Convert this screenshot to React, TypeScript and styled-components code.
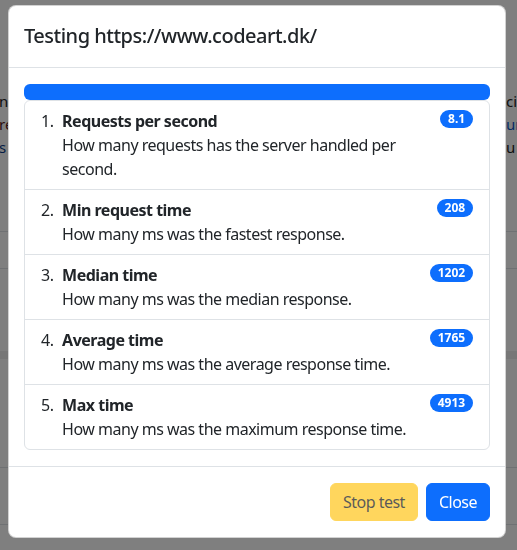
import React from "react";
import styled, { createGlobalStyle } from "styled-components";

const FONT = `"Noto Sans", "Open Sans", sans-serif`;

const GlobalStyle = createGlobalStyle`
  html, body { margin: 0; padding: 0; }
  body {
    font-family: ${FONT};
    color: #212529;
    background: #fff;
    overflow: hidden;
  }
  * { box-sizing: border-box; }
`;

/* ---------- background page ---------- */
const Page = styled.div`
  width: 517px;
  height: 550px;
  background: #fff;
  padding-top: 90px;
  font-size: 15px;
  line-height: 23px;
  overflow: hidden;
`;

const BgLine = styled.div`
  display: flex;
  justify-content: space-between;
  white-space: nowrap;
  height: 23px;
`;

const BgText = styled.span<{ $c?: string }>`
  color: ${(p) => p.$c || "#222"};
`;

const BgLeft = styled(BgText)`
  margin-left: -1px;
`;

const BgRight = styled(BgText)`
  width: 11px;
  overflow: hidden;
`;

const BgRule = styled.div<{ $top: number }>`
  margin-top: ${(p) => p.$top}px;
  border-top: 1px solid #dee2e6;
`;

const BgBand = styled.div<{ $top: number }>`
  margin-top: ${(p) => p.$top}px;
  height: 8px;
  background: #eeeeee;
`;

/* ---------- modal ---------- */
const Backdrop = styled.div`
  position: fixed;
  inset: 0;
  background: rgba(0, 0, 0, 0.5);
`;

const Dialog = styled.div`
  position: fixed;
  top: 5px;
  left: 8px;
  width: 498px;
`;

const Content = styled.div`
  display: flex;
  flex-direction: column;
  background: #fff;
  border: 1px solid rgba(0, 0, 0, 0.175);
  border-radius: 8px;
  overflow: hidden;
  letter-spacing: -0.5px;
`;

const Header = styled.div`
  padding: 15px 15px 16px;
  border-bottom: 1px solid #dee2e6;
`;

const Title = styled.h5`
  margin: 0;
  font-family: ${FONT};
  font-size: 20px;
  font-weight: 500;
  line-height: 30px;
  color: #212529;
`;

const Body = styled.div`
  padding: 16px 15px;
`;

const Progress = styled.div`
  height: 16px;
  border-radius: 6px;
  background: #e9ecef;
  overflow: hidden;
  display: flex;
`;

const ProgressBar = styled.div`
  background: #0d6efd;
  height: 100%;
`;

const List = styled.ol`
  margin: 0;
  padding: 0;
  list-style: none;
  counter-reset: section;
  border: 1px solid #dee2e6;
  border-radius: 6px;
`;

const Item = styled.li`
  display: flex;
  justify-content: space-between;
  align-items: flex-start;
  padding: 8px 16px;
  font-size: 16px;
  line-height: 24px;
  color: #212529;
  counter-increment: section;
  & + & {
    border-top: 1px solid #dee2e6;
  }
  &::before {
    content: counters(section, ".") ". ";
    white-space: pre;
  }
`;

const ItemText = styled.div`
  margin-left: 5px;
  margin-right: auto;
`;

const ItemTitle = styled.div`
  font-weight: 700;
`;

const Badge = styled.span`
  display: inline-block;
  flex-shrink: 0;
  margin-top: 1px;
  padding: 3px 7.8px 3px;
  font-size: 12px;
  font-weight: 700;
  line-height: 12px;
  letter-spacing: 0;
  color: #fff;
  background: #0d6efd;
  border-radius: 50rem;
  white-space: nowrap;
`;

const Footer = styled.div`
  display: flex;
  justify-content: flex-end;
  align-items: center;
  padding: 12px 11px 12px;
  border-top: 1px solid #dee2e6;
`;

const Button = styled.button<{ $variant: "warning" | "primary" }>`
  margin: 4px;
  padding: 6px 12px;
  font-family: ${FONT};
  font-size: 16px;
  line-height: 24px;
  letter-spacing: -0.5px;
  border-radius: 6px;
  border: 1px solid
    ${(p) => (p.$variant === "warning" ? "#ffc107" : "#0d6efd")};
  background: ${(p) => (p.$variant === "warning" ? "#ffc107" : "#0d6efd")};
  color: ${(p) => (p.$variant === "warning" ? "#000" : "#fff")};
  opacity: ${(p) => (p.$variant === "warning" ? 0.65 : 1)};
`;

const metrics = [
  { title: "Requests per second", desc: "How many requests has the server handled per second.", value: "8.1" },
  { title: "Min request time", desc: "How many ms was the fastest response.", value: "208" },
  { title: "Median time", desc: "How many ms was the median response.", value: "1202" },
  { title: "Average time", desc: "How many ms was the average response time.", value: "1765" },
  { title: "Max time", desc: "How many ms was the maximum response time.", value: "4913" },
];

export default function App() {
  return (
    <>
      <GlobalStyle />
      <Page>
        <BgLine>
          <BgLeft>ns</BgLeft>
          <BgRight>ci</BgRight>
        </BgLine>
        <BgLine>
          <BgLeft $c="#5a1a1a">re</BgLeft>
          <BgRight $c="#0a58ca">ur</BgRight>
        </BgLine>
        <BgLine>
          <BgLeft $c="#0a3d8a">s</BgLeft>
          <BgRight>u c</BgRight>
        </BgLine>
        <BgRule $top={72} />
        <BgRule $top={36} />
        <BgBand $top={82} />
        <BgRule $top={108} />
        <BgRule $top={56} />
      </Page>
      <Backdrop />
      <Dialog>
        <Content>
          <Header>
            <Title>Testing https://www.codeart.dk/</Title>
          </Header>
          <Body>
            <Progress>
              <ProgressBar style={{ width: "100%" }} />
            </Progress>
            <List>
              {metrics.map((m) => (
                <Item key={m.title}>
                  <ItemText>
                    <ItemTitle>{m.title}</ItemTitle>
                    {m.desc}
                  </ItemText>
                  <Badge>{m.value}</Badge>
                </Item>
              ))}
            </List>
          </Body>
          <Footer>
            <Button $variant="warning" disabled>
              Stop test
            </Button>
            <Button $variant="primary">Close</Button>
          </Footer>
        </Content>
      </Dialog>
    </>
  );
}
